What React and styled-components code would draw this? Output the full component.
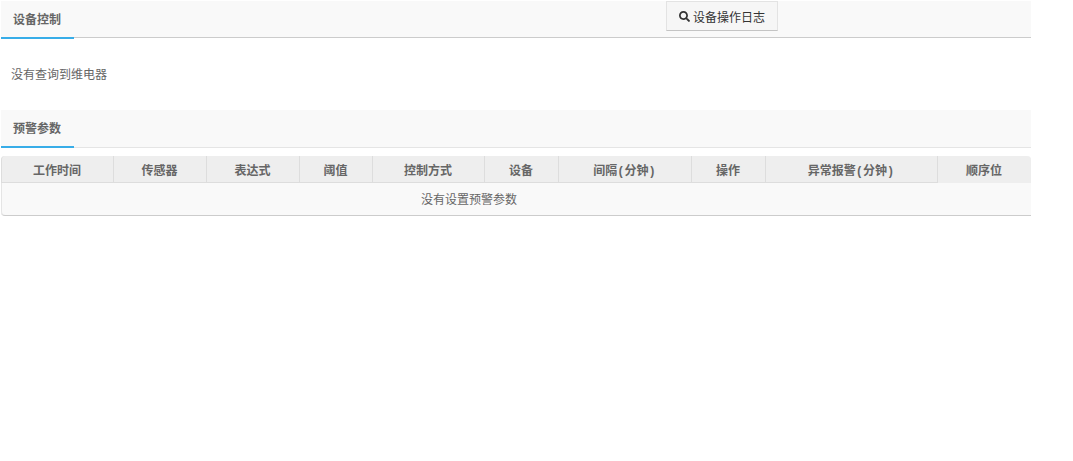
import React from 'react';
import styled, { createGlobalStyle } from 'styled-components';
import { FaSearch } from 'react-icons/fa';

const columns = [
  { label: '工作时间', width: 113 },
  { label: '传感器', width: 93 },
  { label: '表达式', width: 93 },
  { label: '阈值', width: 73 },
  { label: '控制方式', width: 112 },
  { label: '设备', width: 74 },
  { label: '间隔(分钟)', width: 133 },
  { label: '操作', width: 74 },
  { label: '异常报警(分钟)', width: 172 },
  { label: '顺序位', width: 93 },
];

const App = () => (
  <Page>
    <GlobalStyle />
    <Header>
      <Tab>设备控制</Tab>
      <LogButton>
        <FaSearch size={11} color="#333" />
        设备操作日志
      </LogButton>
    </Header>
    <EmptyText>没有查询到维电器</EmptyText>
    <Header light>
      <Tab>预警参数</Tab>
    </Header>
    <Table>
      <colgroup>
        {columns.map(col => <col key={col.label} style={{ width: col.width }} />)}
      </colgroup>
      <thead>
        <tr>
          {columns.map(col => <HeadCell key={col.label}>{col.label}</HeadCell>)}
        </tr>
      </thead>
      <tbody>
        <tr>
          <BodyCell colSpan={9}>没有设置预警参数</BodyCell>
          <BodyCell />
        </tr>
      </tbody>
    </Table>
  </Page>
);

const GlobalStyle = createGlobalStyle`
  html, body {
    margin: 0;
    background: #fff;
  }
  body {
    font-family: "Noto Sans CJK SC", "Liberation Sans", sans-serif;
    font-size: 12px;
    color: #666;
  }
`;

const Page = styled.div`
  width: 1030px;
  margin: 1px 0 0 1px;
`;

const Header = styled.div`
  display: flex;
  height: ${props => (props.light ? '37px' : '36px')};
  background: #f9f9f9;
  border-bottom: 1px solid ${props => (props.light ? '#e5e5e5' : '#ccc')};
`;

const Tab = styled.div`
  flex: none;
  box-sizing: border-box;
  width: 73px;
  height: 38px;
  padding-left: 12px;
  border-bottom: 2px solid #38ade8;
  line-height: 35px;
  font-weight: 700;
  color: #666;
`;

const LogButton = styled.button`
  display: flex;
  align-items: center;
  justify-content: center;
  gap: 3px;
  width: 112px;
  height: 30px;
  margin-left: 592px;
  padding: 0;
  background: #f6f6f6;
  border: 1px solid #e3e3e3;
  border-bottom-color: #c4c4c4;
  font: inherit;
  color: #333;
`;

const EmptyText = styled.p`
  height: 72px;
  margin: 0;
  padding: 27px 0 0 10px;
  box-sizing: border-box;
  line-height: 18px;
  color: #666;
`;

const Table = styled.table`
  width: 1030px;
  margin-top: 8px;
  table-layout: fixed;
  border-collapse: separate;
  border-spacing: 0;
  background: #f9f9f9;
  border-bottom: 1px solid #ccc;
  border-radius: 4px 4px 0 4px;
`;

const HeadCell = styled.th`
  height: 27px;
  padding: 1px 1px 0 0;
  box-sizing: border-box;
  background: #eee;
  border-right: 1px solid #ddd;
  border-bottom: 1px solid #ddd;
  font-family: "Liberation Mono", "Noto Sans CJK SC", monospace;
  font-size: 12px;
  font-weight: 700;
  color: #666;
  text-align: center;

  &:first-child {
    border-left: 1px solid #ddd;
    border-top-left-radius: 4px;
  }
  &:last-child {
    border-right: 0;
    border-bottom: 0;
    border-top-right-radius: 4px;
  }
`;

const BodyCell = styled.td`
  height: 32px;
  padding: 0 2px 2px 0;
  box-sizing: border-box;
  text-align: center;
  color: #666;

  &:first-child {
    border-left: 1px solid #e5e5e5;
    border-bottom-left-radius: 4px;
  }
`;

export default App;
